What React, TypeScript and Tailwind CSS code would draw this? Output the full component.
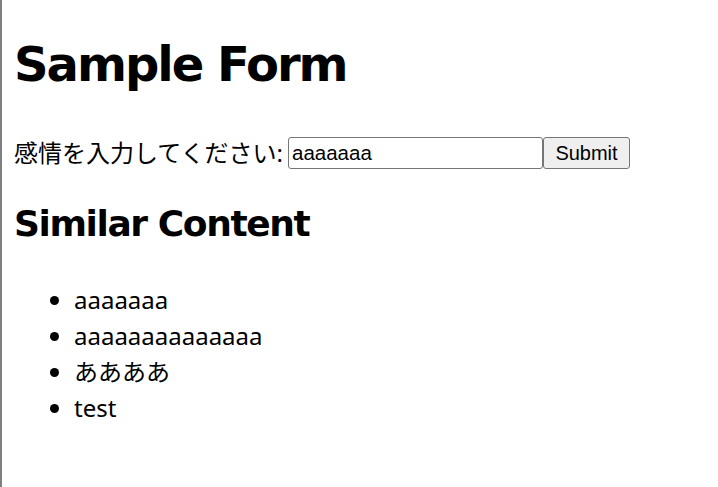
export default function App() {
  const items = ['aaaaaaa', 'aaaaaaaaaaaaaa', 'ああああ', 'test'];
  return (
    <div className="min-h-[487px] border-l-2 border-[#7f7f7f] bg-white px-3 pt-7 text-black font-['Noto_Sans','Noto_Sans_CJK_JP',sans-serif] text-[24px]">
      <h1 className="m-0 text-[48px] leading-[72px] font-bold tracking-[-2px] font-['DejaVu_Sans','Noto_Sans_CJK_JP',sans-serif]">
        Sample Form
      </h1>

      <form className="mt-[35px] flex h-9 items-center" onSubmit={e => e.preventDefault()}>
        <label className="pr-[5px] leading-9">感情を入力してください:</label>
        <input
          defaultValue="aaaaaaa"
          className="h-8 w-[255px] rounded-[3px] border border-[#767676] px-[3px] text-[20.5px] font-['Liberation_Sans',sans-serif] outline-none"
        />
        <button
          type="submit"
          className="h-8 w-[87px] rounded-[3px] border border-[#767676] bg-[#efefef] text-[20px] font-['Liberation_Sans',sans-serif]"
        >
          Submit
        </button>
      </form>

      <h2 className="mt-[26px] text-[36px] leading-[54px] font-bold tracking-[-1.4px] font-['DejaVu_Sans','Noto_Sans_CJK_JP',sans-serif]">
        Similar Content
      </h2>

      <ul className="mt-[31px] list-disc pl-[60px]">
        {items.map(t => (
          <li key={t} className="leading-9">{t}</li>
        ))}
      </ul>
    </div>
  );
}
